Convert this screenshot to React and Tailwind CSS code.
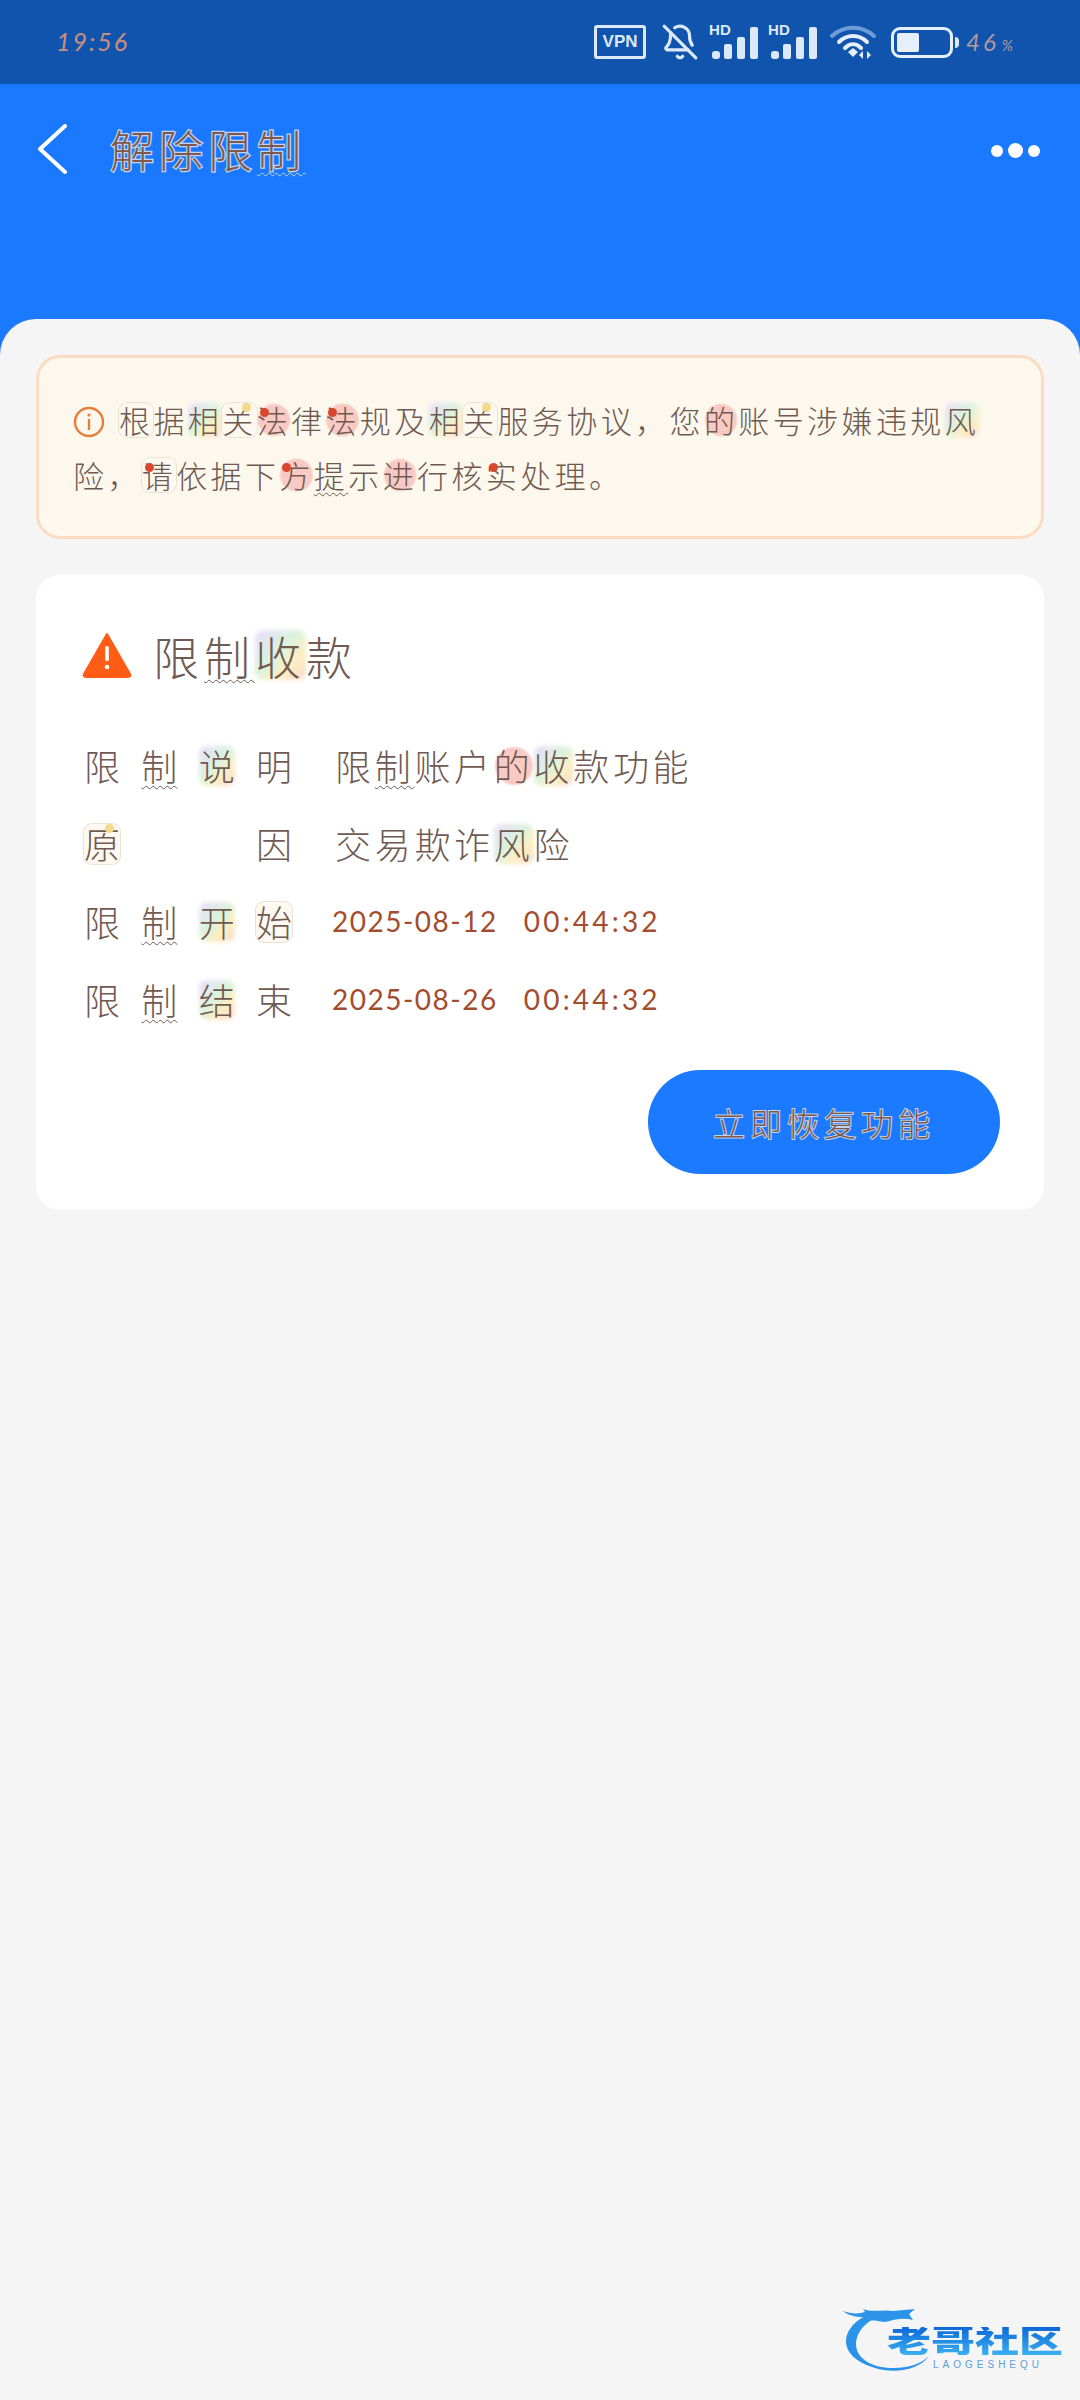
import React from "react";
import { BellOff } from "lucide-react";

const CJK = "font-['Noto_Sans_CJK_SC','Noto_Sans',sans-serif]";

const markStyles = {
  pink: "bg-[radial-gradient(circle,#f9cac4_0%,#f9cac4_62%,transparent_72%)]",
  sticker: "rounded-lg bg-[#fdf9f0] shadow-[0_0_0_1px_#ece2d2]",
  rainbow: "",
  plain: "",
};

const Mark = ({ type = "plain", dot, moon, wave, children }) => (
  <span
    className={`relative isolate inline-block leading-[1.1] ${markStyles[type]} ${
      wave ? "underline decoration-wavy decoration-1 underline-offset-4" : ""
    }`}
  >
    {type === "rainbow" && (
      <span className="absolute inset-0 -z-10 rounded-lg bg-[linear-gradient(135deg,#eadcfc_0%,#d9f3de_45%,#fdeec0_70%,#fbd8d0_100%)] blur-[2px]"></span>
    )}
    {children}
    {dot && (
      <span className="absolute left-[3px] top-[5px] h-[9px] w-[9px] rounded-full bg-[#d9472f]"></span>
    )}
    {moon && (
      <span className="absolute right-[6px] top-[0px] h-[9px] w-[9px] rounded-full bg-[#f3d98a]"></span>
    )}
  </span>
);

const SignalIcon = () => (
  <div className="relative h-[34px] w-[49px]">
    <span className="absolute left-0 top-[-3px] font-['Liberation_Sans',sans-serif] text-[15px] font-bold leading-[16px] text-[#dce9fb]">
      HD
    </span>
    <svg viewBox="0 0 49 34" className="h-[34px] w-[49px]" fill="#dce9fb">
      <rect x="3" y="26" width="8" height="8" rx="3" />
      <rect x="15" y="19" width="8" height="15" rx="2" />
      <rect x="28" y="12" width="8" height="22" rx="2" />
      <rect x="41" y="2" width="8" height="32" rx="2" />
    </svg>
  </div>
);

const WifiIcon = () => (
  <svg viewBox="0 0 46 36" className="h-[36px] w-[46px]" fill="none" strokeLinecap="round">
    <path d="M2 12C14 1 32 1 44 12" stroke="#6f9bd6" strokeWidth="4" />
    <path d="M9 18C17 10 29 10 37 18" stroke="#e6effc" strokeWidth="4" />
    <path d="M15 24C20 19 26 19 31 24" stroke="#e6effc" strokeWidth="4" />
    <path d="M18 28L23 24L28 28L23 33Z" fill="#e6effc" />
    <path d="M33 27L29 31L33 35Z" fill="#e6effc" />
    <path d="M37 35V27L41 31Z" fill="#e6effc" />
  </svg>
);

const StatusBar = () => (
  <div className="flex h-[84px] items-center justify-between bg-[#1054ae] pl-[56px] pr-[64px]">
    <span className="font-['Lato',sans-serif] text-[25px] italic tracking-[2px] text-[#c98f7e]">19:56</span>
    <div className="flex items-center">
      <div className="flex h-[34px] w-[52px] items-center justify-center rounded-[3px] border-[3px] border-[#dce9fb] font-['Liberation_Sans',sans-serif] text-[17px] font-bold text-[#dce9fb]">
        VPN
      </div>
      <BellOff className="ml-[15px] h-[38px] w-[38px] text-[#dce9fb]" strokeWidth={2} />
      <div className="ml-[10px]">
        <SignalIcon />
      </div>
      <div className="ml-[10px]">
        <SignalIcon />
      </div>
      <div className="ml-[13px]">
        <WifiIcon />
      </div>
      <div className="ml-[15px] flex items-center">
        <div className="h-[31px] w-[62px] rounded-[9px] border-[3px] border-[#e6effc] p-[3px]">
          <div className="h-full w-[22px] rounded-[2px] bg-[#e6effc]"></div>
        </div>
        <div className="ml-[2px] h-[11px] w-[4px] rounded-r-sm bg-[#dce9fb]"></div>
      </div>
      <span className="ml-[7px] font-['Lato',sans-serif] text-[24px] italic tracking-[3px] text-[#b69a9a]">
        46<span className="ml-[3px] text-[15px]">%</span>
      </span>
    </div>
  </div>
);

const Header = () => (
  <div className="flex h-[235px] items-start justify-between pl-[37px] pr-[40px] pt-[32px]">
    <div className="flex items-center">
      <svg viewBox="0 0 30 50" className="h-[50px] w-[30px]" fill="none">
        <path d="M28 2L3 25L28 48" stroke="#fff" strokeWidth="4" strokeLinecap="round" strokeLinejoin="round" />
      </svg>
      <h1
        className={`${CJK} ml-[43px] text-[44px] font-light tracking-[5px] text-[#7d5850] [-webkit-text-stroke:2.5px_#c3d3ea] [paint-order:stroke_fill]`}
      >
        解除限<Mark wave>制</Mark>
      </h1>
    </div>
    <div className="mt-[27px] flex items-center gap-[5px]">
      <span className="h-[12px] w-[12px] rounded-full bg-white"></span>
      <span className="h-[15px] w-[15px] rounded-full bg-white"></span>
      <span className="h-[12px] w-[12px] rounded-full bg-white"></span>
    </div>
  </div>
);

const Notice = () => (
  <div className="mx-[36px] mt-[36px] h-[184px] rounded-[24px] border-[3px] border-[#fbdcc3] bg-[#fdf8ee] pl-[34px] pr-[30px] pt-[34px]">
    <p className={`${CJK} text-[31px] font-light leading-[55px] tracking-[3.4px] text-[#6f5a52]`}>
      <svg viewBox="0 0 32 32" className="mr-[14px] inline-block h-[32px] w-[32px] align-[-5px]" fill="none">
        <circle cx="16" cy="16" r="14" stroke="#e57f3b" strokeWidth="2.4" />
        <path d="M16 13V24" stroke="#e57f3b" strokeWidth="2.4" />
        <circle cx="16" cy="9" r="1.6" fill="#e57f3b" />
      </svg>
      <Mark type="sticker">根</Mark>据<Mark type="rainbow">相</Mark><Mark type="sticker" moon>关</Mark>
      <Mark type="pink" dot>法</Mark>律<Mark type="pink" dot>法</Mark>规及<Mark type="rainbow">相</Mark>
      <Mark type="sticker" moon>关</Mark>服务协议，您<Mark type="pink">的</Mark>账号涉嫌违规<Mark type="rainbow">风</Mark>
      <br />
      险，<Mark type="sticker" dot>请</Mark>依据下<Mark type="pink" dot>方</Mark><Mark wave>提</Mark>示
      <Mark type="pink">进</Mark>行核<Mark dot>实</Mark>处理。
    </p>
  </div>
);

const Label = ({ children }) => (
  <div className="flex w-[208px] items-baseline justify-between text-[36px] font-light text-[#705a52]">{children}</div>
);

const Row = ({ label, children }) => (
  <div className="flex h-[78px] items-center">
    <Label>{label}</Label>
    <div className="ml-[43px] flex items-center">{children}</div>
  </div>
);

const Value = ({ children }) => (
  <span className="text-[36px] font-light tracking-[3.7px] text-[#705a52]">{children}</span>
);

const DateValue = ({ day, time }) => (
  <span className="ml-[-3px] whitespace-pre font-['Lato',sans-serif] text-[28px] tracking-[1.5px] text-[#a34d2e]">
    {day}   <span className="tracking-[3.2px]">{time}</span>
  </span>
);

const RestrictionCard = () => (
  <div className={`${CJK} mx-[36px] mt-[36px] h-[635px] rounded-[24px] bg-white pl-[48px] pr-[44px] pt-[47px]`}>
    <div className="flex h-[66px] items-center">
      <svg viewBox="0 0 50 46" className="ml-[-2px] h-[46px] w-[50px]">
        <path d="M25 2L48 42C49 44 48 45 46 45H4C2 45 1 44 2 42Z" fill="#ff5c16" stroke="#ff5c16" strokeLinejoin="round" strokeWidth="2" />
        <rect x="23.2" y="14" width="3.6" height="15" rx="1.5" fill="#fff" />
        <circle cx="25" cy="35" r="2.3" fill="#fff" />
      </svg>
      <h2 className="ml-[21px] text-[46px] font-light tracking-[5px] text-[#705a52]">
        限<Mark wave>制</Mark><Mark type="rainbow">收</Mark>款
      </h2>
    </div>
    <div className="mt-[38px]">
      <Row
        label={
          <>
            <span>限</span>
            <Mark wave>制</Mark>
            <Mark type="rainbow">说</Mark>
            <span>明</span>
          </>
        }
      >
        <Value>
          限<Mark wave>制</Mark>账户<Mark type="pink">的</Mark><Mark type="rainbow">收</Mark>款功能
        </Value>
      </Row>
      <Row
        label={
          <>
            <Mark type="sticker" moon>原</Mark>
            <span>因</span>
          </>
        }
      >
        <Value>
          交易欺诈<Mark type="rainbow">风</Mark>险
        </Value>
      </Row>
      <Row
        label={
          <>
            <span>限</span>
            <Mark wave>制</Mark>
            <Mark type="rainbow">开</Mark>
            <Mark type="sticker">始</Mark>
          </>
        }
      >
        <DateValue day="2025-08-12" time="00:44:32" />
      </Row>
      <Row
        label={
          <>
            <span>限</span>
            <Mark wave>制</Mark>
            <Mark type="rainbow">结</Mark>
            <span>束</span>
          </>
        }
      >
        <DateValue day="2025-08-26" time="00:44:32" />
      </Row>
    </div>
    <div className="mt-[32px] flex justify-end">
      <button className="h-[104px] w-[352px] rounded-full bg-[#1b7aff] text-[32px] font-light tracking-[5px] text-[#7d5850] [-webkit-text-stroke:2px_#c3d3ea] [paint-order:stroke_fill]">
        立即恢复功能
      </button>
    </div>
  </div>
);

const Logo = () => (
  <div className="relative mb-[28px] mr-[17px] h-[64px] w-[220px] self-end">
    <svg viewBox="0 0 220 64" className="absolute inset-0 h-full w-full" fill="#2b93ea">
      <path d="M0 3C8 6 16 6 22 4L20 1C30 5 40 1 50 3L72 1L66 6L70 12C60 9 50 12 42 14C34 13 30 12 27 13C18 19 13 28 13 36C13 50 28 60 50 60C66 60 78 56 86 48C76 62 52 66 32 60C12 54 3 44 3 33C3 24 10 15 20 9C12 9 5 7 0 3Z" />
    </svg>
    <div className="absolute right-0 top-[13px] scale-y-[.7] bg-[linear-gradient(180deg,#0b68d8,#3bb0f0)] bg-clip-text font-['Liberation_Sans','Noto_Sans_CJK_SC',sans-serif] text-[44px] font-black leading-[40px] text-transparent">
      老哥社区
    </div>
    <div className="absolute bottom-[1px] left-[90px] font-['Liberation_Sans',sans-serif] text-[10px] leading-[12px] tracking-[4px] text-[#5b9fdc]">
      LAOGESHEQU
    </div>
  </div>
);

const App = () => {
  return (
    <div className="flex h-[2400px] w-[1080px] flex-col overflow-hidden bg-[linear-gradient(180deg,#1a78ff,#2083ff)]">
      <StatusBar />
      <Header />
      <div className="flex flex-1 flex-col rounded-t-[36px] bg-[#f5f5f5]">
        <Notice />
        <RestrictionCard />
        <div className="mt-auto flex justify-end">
          <Logo />
        </div>
      </div>
    </div>
  );
};

export default App;
